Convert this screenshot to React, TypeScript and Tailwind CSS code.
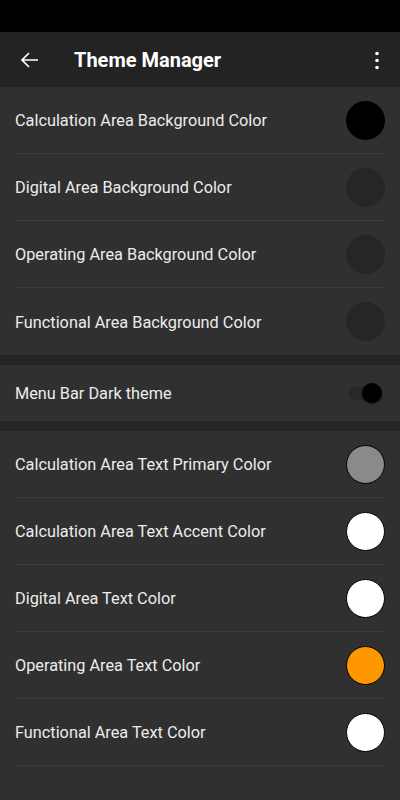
import React from "react";

const font = { fontFamily: "Roboto, 'Noto Sans', sans-serif" };

function ColorRow(props: { label: string; swatch: string; last?: boolean }) {
  return (
    <div className="px-[15px]">
      <div
        className={
          "flex h-[67px] items-center justify-between " +
          (props.last ? "" : "border-b border-[#3c3c3c]")
        }
      >
        <span className="pt-[3px] text-[16.3px] text-[#ececec]">{props.label}</span>
        <div className={"h-[39px] w-[39px] rounded-full " + props.swatch} />
      </div>
    </div>
  );
}

export default function App() {
  return (
    <div className="flex h-[800px] w-[400px] flex-col bg-[#303030]" style={font}>
      <div className="h-8 bg-black" />
      <div className="flex h-[55px] items-center bg-[#232323]">
        <svg className="ml-[18px] h-6 w-6" viewBox="0 0 24 24" fill="none" stroke="#fff" strokeWidth="1.7">
          <path d="M20 12H4M11 5l-7 7 7 7" />
        </svg>
        <span className="ml-[32px] text-[20px] font-bold text-white">Theme Manager</span>
        <svg className="ml-auto mr-[11px] h-6 w-6" viewBox="0 0 24 24" fill="#fff">
          <circle cx="12" cy="5.5" r="1.8" />
          <circle cx="12" cy="12.5" r="1.8" />
          <circle cx="12" cy="19.5" r="1.8" />
        </svg>
      </div>

      <ColorRow label="Calculation Area Background Color" swatch="bg-black" />
      <ColorRow label="Digital Area Background Color" swatch="bg-[#262626]" />
      <ColorRow label="Operating Area Background Color" swatch="bg-[#262626]" />
      <ColorRow label="Functional Area Background Color" swatch="bg-[#262626]" last />

      <div className="h-[10px] bg-[#262626]" />
      <div className="flex h-[56px] items-center justify-between px-[15px]">
        <span className="pt-[3px] text-[16.3px] text-[#ececec]">Menu Bar Dark theme</span>
        <div className="relative mr-[9px] flex h-[13px] w-[27px] items-center rounded-full bg-[#282828]">
          <div className="absolute right-[-6px] h-[20px] w-[20px] rounded-full bg-black shadow-[0_1px_2px_rgba(0,0,0,0.6)]" />
        </div>
      </div>
      <div className="h-[10px] bg-[#262626]" />

      <ColorRow label="Calculation Area Text Primary Color" swatch="bg-[#8a8a8a] border border-black" />
      <ColorRow label="Calculation Area Text Accent Color" swatch="bg-white border border-black" />
      <ColorRow label="Digital Area Text Color" swatch="bg-white border border-black" />
      <ColorRow label="Operating Area Text Color" swatch="bg-[#ff9800] border border-black" />
      <ColorRow label="Functional Area Text Color" swatch="bg-white border border-black" />
    </div>
  );
}
